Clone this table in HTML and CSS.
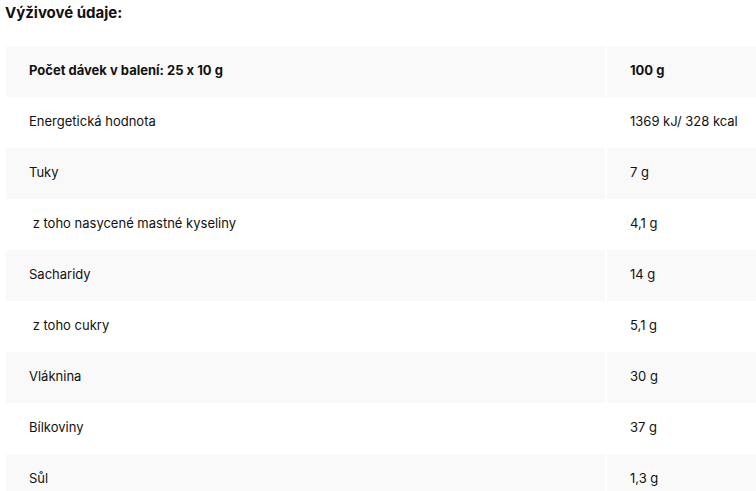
FILE: index.html
```html
<!DOCTYPE html>
<html lang="cs">
<head>
<meta charset="utf-8">
<link rel="stylesheet" href="styles.css">
</head>
<body>
<section class="nutrition">
  <h3 class="title">Výživové údaje:</h3>
  <table class="table">
    <tbody>
      <tr class="head"><td>Počet dávek v balení: 25 x 10 g</td><td>100 g</td></tr>
      <tr><td>Energetická hodnota</td><td>1369 kJ/ 328 kcal</td></tr>
      <tr><td>Tuky</td><td>7 g</td></tr>
      <tr><td>&nbsp;z toho nasycené mastné kyseliny</td><td>4,1 g</td></tr>
      <tr><td>Sacharidy</td><td>14 g</td></tr>
      <tr><td>&nbsp;z toho cukry</td><td>5,1 g</td></tr>
      <tr><td>Vláknina</td><td>30 g</td></tr>
      <tr><td>Bílkoviny</td><td>37 g</td></tr>
      <tr><td>Sůl</td><td>1,3 g</td></tr>
    </tbody>
  </table>
</section>
</body>
</html>
```
FILE: styles.css
```css
html, body {
  margin: 0;
  padding: 0;
  background: #fff;
}
body {
  font-family: Inter, "Noto Sans", sans-serif;
  font-feature-settings: "calt" 0;
  color: #111;
}
.nutrition {
  padding: 0 0 0 5px;
}
.title {
  margin: 0;
  padding-top: 4px;
  font-size: 15px;
  font-weight: 700;
  line-height: 18px;
  height: 42px;
}
.table {
  margin-left: 1px;
  width: 760px;
  border-collapse: collapse;
  font-size: 13px;
}
.table td {
  height: 51px;
  padding: 0 0 4px 23px;
  vertical-align: middle;
  box-sizing: border-box;
}
.table td:first-child {
  width: 600px;
  border-right: 2px solid #fff;
}
.table tr:nth-child(odd) td {
  background: #f9f9f9;
}
.table tr.head td {
  font-weight: 700;
}
```
